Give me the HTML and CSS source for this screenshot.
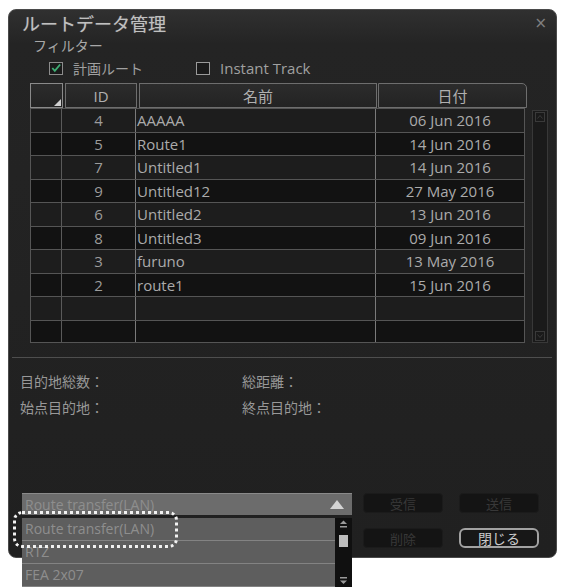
FILE: index.html
```html
<!DOCTYPE html>
<html lang="ja">
<head>
<meta charset="utf-8">
<title>ルートデータ管理</title>
<link rel="stylesheet" href="styles.css">
</head>
<body>
<div class="dialog">
  <div class="titlebar">
    <span class="title">ルートデータ管理</span>
    <span class="close">×</span>
  </div>
  <div class="filter">フィルター</div>
  <div class="checks">
    <div class="check">
      <span class="box"><svg width="13" height="12" viewBox="0 0 13 12"><path d="M2.5 6 L5.2 9 L11 2.2" fill="none" stroke="#3fae74" stroke-width="2"/></svg></span>
      <span>計画ルート</span>
    </div>
    <div class="check second">
      <span class="box"></span>
      <span class="latin">Instant Track</span>
    </div>
  </div>
  <div class="tablearea">
    <div class="table">
      <div class="thead">
        <div class="th corner"><span class="tri"></span></div>
        <div class="th">ID</div>
        <div class="th">名前</div>
        <div class="th last">日付</div>
      </div>
      <div class="tbody">
        <div class="tr"><div class="td"></div><div class="td id">4</div><div class="td name">AAAAA</div><div class="td date">06 Jun 2016</div></div>
        <div class="tr"><div class="td"></div><div class="td id">5</div><div class="td name">Route1</div><div class="td date">14 Jun 2016</div></div>
        <div class="tr"><div class="td"></div><div class="td id">7</div><div class="td name">Untitled1</div><div class="td date">14 Jun 2016</div></div>
        <div class="tr"><div class="td"></div><div class="td id">9</div><div class="td name">Untitled12</div><div class="td date">27 May 2016</div></div>
        <div class="tr"><div class="td"></div><div class="td id">6</div><div class="td name">Untitled2</div><div class="td date">13 Jun 2016</div></div>
        <div class="tr"><div class="td"></div><div class="td id">8</div><div class="td name">Untitled3</div><div class="td date">09 Jun 2016</div></div>
        <div class="tr"><div class="td"></div><div class="td id">3</div><div class="td name">furuno</div><div class="td date">13 May 2016</div></div>
        <div class="tr"><div class="td"></div><div class="td id">2</div><div class="td name">route1</div><div class="td date">15 Jun 2016</div></div>
        <div class="tr"><div class="td"></div><div class="td id"></div><div class="td name"></div><div class="td date"></div></div>
        <div class="tr"><div class="td"></div><div class="td id"></div><div class="td name"></div><div class="td date"></div></div>
      </div>
    </div>
    <div class="vscroll">
      <svg width="14" height="12" viewBox="0 0 14 12"><rect x="2.5" y="1.5" width="9" height="9" fill="none" stroke="#3a3a3a"/><path d="M4.5 7.5 L7 4.5 L9.5 7.5" fill="none" stroke="#3a3a3a"/></svg>
      <svg width="14" height="12" viewBox="0 0 14 12"><rect x="2.5" y="1.5" width="9" height="9" fill="none" stroke="#3a3a3a"/><path d="M4.5 4.5 L7 7.5 L9.5 4.5" fill="none" stroke="#3a3a3a"/></svg>
    </div>
  </div>
  <div class="sep"></div>
  <div class="info">
    <span>目的地総数：</span><span>総距離：</span>
    <span>始点目的地：</span><span>終点目的地：</span>
  </div>
  <div class="bottom">
    <div class="dropwrap">
      <div class="dropdown">
        <span class="latin">Route transfer(LAN)</span>
        <span class="arrow"></span>
      </div>
      <div class="droplist">
        <div class="items">
          <div class="item">Route transfer(LAN)</div>
          <div class="item">RTZ</div>
          <div class="item">FEA 2x07</div>
        </div>
        <div class="lscroll">
          <svg width="17" height="14" viewBox="0 0 17 14"><path d="M5 6 L8.5 2.5 L12 6 Z" fill="#9a9a9a"/><rect x="5" y="8" width="7" height="1.5" fill="#9a9a9a"/></svg>
          <span class="thumb"></span>
          <span class="grow"></span>
          <svg width="17" height="14" viewBox="0 0 17 14"><rect x="5" y="4" width="7" height="1.5" fill="#9a9a9a"/><path d="M5 7.5 L8.5 11 L12 7.5 Z" fill="#9a9a9a"/></svg>
        </div>
      </div>
      <div class="highlight"></div>
    </div>
    <div class="buttons">
      <div class="btn off">受信</div>
      <div class="btn off">送信</div>
      <div class="btn off">削除</div>
      <div class="btn on">閉じる</div>
    </div>
  </div>
</div>
</body>
</html>
```

FILE: styles.css
```css
html, body {
  margin: 0;
  padding: 0;
  overflow: hidden;
  background: #ffffff;
}
body {
  width: 562px;
  height: 587px;
  font-family: "Noto Sans CJK JP", "Open Sans", sans-serif;
}
.latin {
  font-family: "Open Sans", "Noto Sans CJK JP", sans-serif;
}
.dialog {
  box-sizing: border-box;
  margin: 9px 0 0 8px;
  width: 549px;
  height: 549px;
  border: 1px solid #4a4a4a;
  border-radius: 8px;
  background: linear-gradient(#303030 0, #242424 34px, #202020 100%);
  display: flex;
  flex-direction: column;
}
.titlebar {
  height: 26px;
  display: flex;
  align-items: center;
  justify-content: space-between;
  padding: 0 9px 0 13px;
}
.title {
  font-size: 18px;
  line-height: 26px;
  color: #c0c0c0;
  text-shadow: 0 0 1px #777;
}
.close {
  font-family: "DejaVu Sans", sans-serif;
  font-size: 15px;
  line-height: 26px;
  color: #808080;
}
.filter {
  height: 18px;
  line-height: 18px;
  padding-left: 24px;
  font-size: 14px;
  color: #a8a8a8;
}
.checks {
  margin-top: 3px;
  height: 22px;
  display: flex;
  align-items: center;
  padding-left: 40px;
  font-size: 14px;
  color: #a0a0a0;
}
.check {
  display: flex;
  align-items: center;
  gap: 10px;
  line-height: 22px;
}
.check .latin {
  font-size: 15px;
}
.check.second {
  margin-left: 53px;
}
.box {
  box-sizing: border-box;
  width: 14px;
  height: 13px;
  border: 1px solid #8c8c8c;
  background: #1a1a1a;
  display: flex;
  align-items: center;
  justify-content: center;
}
.second .box {
  border-color: #9a9a9a;
}
.tablearea {
  margin-top: 4px;
  display: flex;
  padding-left: 21px;
}
.table {
  width: 497px;
}
.thead {
  display: grid;
  grid-template-columns: 33px 74px 240px 150px;
  height: 25px;
}
.th {
  box-sizing: border-box;
  border: 1px solid #6e6e6e;
  background: linear-gradient(#2c2c2c, #232323);
  color: #b0b0b0;
  font-family: "Open Sans", "Noto Sans CJK JP", sans-serif;
  font-size: 15px;
  display: flex;
  align-items: center;
  justify-content: center;
  margin-left: 2px;
}
.th.corner {
  margin-left: 0;
  border-color: #8a8a8a;
  position: relative;
}
.th.last {
  border-top-right-radius: 5px;
  margin-left: 1px;
}
.tri {
  position: absolute;
  right: 1px;
  bottom: 1px;
  width: 0;
  height: 0;
  border-left: 7px solid transparent;
  border-bottom: 7px solid #d0d0d0;
}
.tbody {
  width: 495px;
  border-left: 1px solid #555;
  box-sizing: border-box;
}
.tr {
  display: grid;
  grid-template-columns: 31px 74px 240px 149px;
  height: 23.5px;
  box-sizing: border-box;
  border-top: 1px solid #555555;
  background: #1d1d1d;
  font-family: "Open Sans", "Noto Sans CJK JP", sans-serif;
  font-size: 15px;
  color: #ababab;
}
.tr:nth-child(even) {
  background: #121212;
}
.tr:last-child {
  border-bottom: 1px solid #555555;
}
.td {
  box-sizing: border-box;
  border-right: 1px solid #7a7a7a;
  display: flex;
  align-items: center;
  line-height: 20px;
}
.td:first-child {
  border-right-color: #5a5a5a;
}
.td.id {
  justify-content: center;
  color: #9c9c9c;
}
.td.name {
  padding-left: 1px;
}
.td.date {
  justify-content: center;
  border-right-color: #555;
}
.vscroll {
  box-sizing: border-box;
  margin: 27px 0 0 5px;
  width: 16px;
  height: 233px;
  border: 1px solid #383838;
  background: #1a1a1a;
  display: flex;
  flex-direction: column;
  justify-content: space-between;
  align-items: center;
}
.sep {
  margin: 14px 0 0 3px;
  width: 540px;
  height: 1px;
  background: #4e4e4e;
}
.info {
  padding: 10px 0 0 11px;
  display: grid;
  grid-template-columns: 222px auto;
  grid-auto-rows: 26px;
  align-items: center;
  font-size: 14px;
  color: #989898;
}
.bottom {
  margin-top: auto;
  padding: 0 0 9px 13px;
  display: flex;
  gap: 11px;
  align-items: flex-start;
}
.dropwrap {
  position: relative;
  width: 330px;
}
.dropdown {
  box-sizing: border-box;
  height: 22px;
  background: #6c6c6c;
  border-top: 1px solid #8a8a8a;
  display: flex;
  align-items: center;
  justify-content: space-between;
  padding: 0 8px 0 3px;
  font-size: 14px;
  color: #8e8e8e;
}
.arrow {
  width: 0;
  height: 0;
  border-left: 7px solid transparent;
  border-right: 7px solid transparent;
  border-bottom: 9px solid #d4d4d4;
}
.droplist {
  position: absolute;
  left: 0;
  top: 25px;
  width: 330px;
  height: 69px;
  display: flex;
  background: #5e5e5e;
}
.items {
  flex: 1;
}
.item {
  box-sizing: border-box;
  height: 23px;
  border-bottom: 1px solid #838383;
  padding-left: 3px;
  line-height: 22px;
  font-family: "Open Sans", sans-serif;
  font-size: 14px;
  color: #8e8e8e;
}
.lscroll {
  width: 17px;
  background: #101010;
  display: flex;
  flex-direction: column;
  align-items: center;
}
.thumb {
  margin-top: 3px;
  width: 9px;
  height: 12px;
  background: #bdbdbd;
}
.grow {
  flex: 1;
}
.highlight {
  position: absolute;
  left: -9px;
  top: 18px;
  width: 159px;
  height: 31px;
  border: 3px dotted #f2f2f2;
  border-radius: 9px;
}
.buttons {
  display: grid;
  grid-template-columns: 80px 80px;
  grid-auto-rows: 20px;
  column-gap: 16px;
  row-gap: 15px;
}
.btn {
  box-sizing: border-box;
  display: flex;
  align-items: center;
  justify-content: center;
  font-size: 13px;
  border-radius: 4px;
}
.btn.off {
  background: #141414;
  border: 1px solid #1b1b1b;
  color: #383838;
}
.btn.on {
  background: #171717;
  border: 2px solid #a2a2a2;
  border-radius: 6px;
  color: #cacaca;
  font-size: 14px;
}
```
